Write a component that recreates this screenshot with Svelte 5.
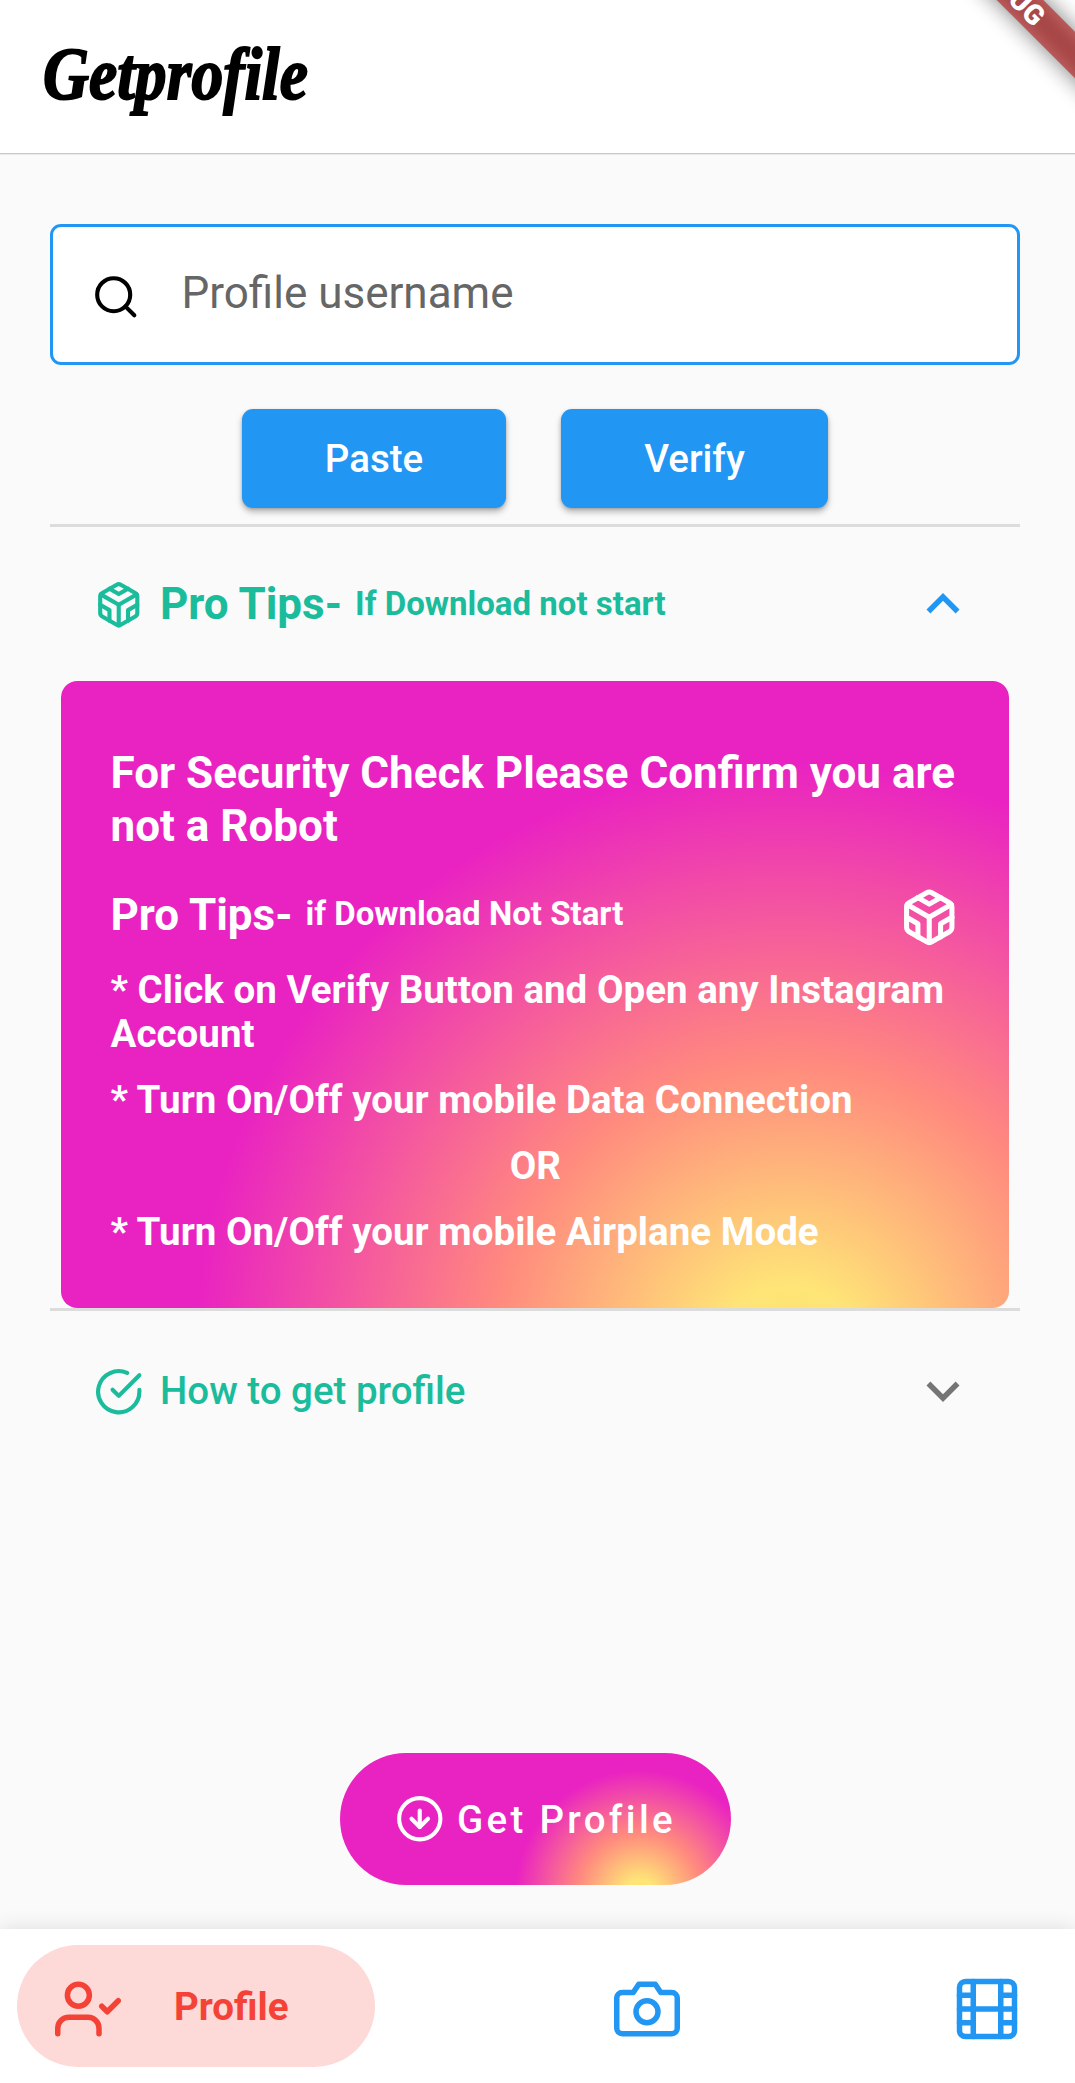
<script>
  const tips = [
    { text: '* Click on Verify Button and Open any Instagram Account' },
    { text: '* Turn On/Off your mobile Data Connection' },
    { text: 'OR', center: true },
    { text: '* Turn On/Off your mobile Airplane Mode' }
  ];
</script>

{#snippet cube()}
  <path d="M21 16V8a2 2 0 0 0-1-1.73l-7-4a2 2 0 0 0-2 0l-7 4A2 2 0 0 0 3 8v8a2 2 0 0 0 1 1.73l7 4a2 2 0 0 0 2 0l7-4A2 2 0 0 0 21 16z" />
  <polyline points="7.5 4.21 12 6.81 16.5 4.21" />
  <polyline points="7.5 19.79 7.5 14.6 3 12" />
  <polyline points="21 12 16.5 14.6 16.5 19.79" />
  <polyline points="3.27 6.96 12 12.01 20.73 6.96" />
  <line x1="12" y1="22.08" x2="12" y2="12" />
{/snippet}

<div class="screen">
  <header>
    <svg class="logo" width="300" height="153" role="img" aria-label="Getprofile">
      <text x="43" y="99" textLength="265" lengthAdjust="spacingAndGlyphs">Getprofile</text>
    </svg>
    <svg class="ribbon" width="145" height="150" viewBox="0 0 145 150" aria-hidden="true">
      <defs>
        <filter id="soft" x="-50%" y="-200%" width="200%" height="500%">
          <feGaussianBlur stdDeviation="11" />
        </filter>
      </defs>
      <g transform="translate(79 -11) rotate(45)">
        <rect class="shade" x="-110" y="-16.5" width="300" height="33" filter="url(#soft)" />
        <rect class="band" x="-110" y="-16.5" width="300" height="33" />
        <text x="0" y="10" text-anchor="middle">DEBUG</text>
      </g>
    </svg>
  </header>

  <main>
    <div class="field">
      <svg class="feather s18" viewBox="0 0 24 24">
        <circle cx="11" cy="11" r="8" />
        <line x1="21" y1="21" x2="16.65" y2="16.65" />
      </svg>
      <span>Profile username</span>
    </div>

    <div class="actions">
      <button class="paste">Paste</button>
      <button class="verify">Verify</button>
    </div>

    <section class="panel">
      <div class="row first">
        <svg class="feather s18" viewBox="0 0 24 24">{@render cube()}</svg>
        <strong>Pro Tips-</strong>
        <small>If Download not start</small>
        <svg class="chevron up" viewBox="0 0 24 24"><path d="M16.59 8.59L12 13.17 7.41 8.59 6 10l6 6 6-6z" /></svg>
      </div>
      <div class="card">
        <h2>For Security Check Please Confirm you are not a Robot</h2>
        <div class="sub">
          <strong>Pro Tips-</strong>
          <small>if Download Not Start</small>
          <svg class="feather s22" viewBox="0 0 24 24">{@render cube()}</svg>
        </div>
        {#each tips as tip}
          <p class:center={tip.center}>{tip.text}</p>
        {/each}
      </div>
    </section>

    <section class="panel">
      <div class="row second">
        <svg class="feather s18" viewBox="0 0 24 24">
          <path d="M22 11.08V12a10 10 0 1 1-5.93-9.14" />
          <polyline points="22 4 12 14.01 9 11.01" />
        </svg>
        <span>How to get profile</span>
        <svg class="chevron" viewBox="0 0 24 24"><path d="M16.59 8.59L12 13.17 7.41 8.59 6 10l6 6 6-6z" /></svg>
      </div>
    </section>

    <button class="get">
      <svg class="feather s18" viewBox="0 0 24 24">
        <circle cx="12" cy="12" r="10" />
        <polyline points="8 12 12 16 16 12" />
        <line x1="12" y1="8" x2="12" y2="16" />
      </svg>
      <span>Get Profile</span>
    </button>
  </main>

  <nav>
    <div class="tab active">
      <svg class="feather s24" viewBox="0 0 24 24">
        <path d="M16 21v-2a4 4 0 0 0-4-4H5a4 4 0 0 0-4 4v2" />
        <circle cx="8.5" cy="7" r="4" />
        <polyline points="17 11 19 13 23 9" />
      </svg>
      <span>Profile</span>
    </div>
    <div class="tab">
      <svg class="feather s24" viewBox="0 0 24 24">
        <path d="M23 19a2 2 0 0 1-2 2H3a2 2 0 0 1-2-2V8a2 2 0 0 1 2-2h4l2-3h6l2 3h4a2 2 0 0 1 2 2z" />
        <circle cx="12" cy="13" r="4" />
      </svg>
    </div>
    <div class="tab">
      <svg class="feather s24" viewBox="0 0 24 24">
        <rect x="2" y="2" width="20" height="20" rx="2.18" />
        <line x1="7" y1="2" x2="7" y2="22" />
        <line x1="17" y1="2" x2="17" y2="22" />
        <line x1="2" y1="12" x2="22" y2="12" />
        <line x1="2" y1="7" x2="7" y2="7" />
        <line x1="2" y1="17" x2="7" y2="17" />
        <line x1="17" y1="17" x2="22" y2="17" />
        <line x1="17" y1="7" x2="22" y2="7" />
      </svg>
    </div>
  </nav>
</div>

<style>
  :global(body) {
    margin: 0;
    background: #fafafa;
  }
  .screen {
    width: 1075px;
    height: 2083px;
    display: flex;
    flex-direction: column;
    overflow: hidden;
    background: #fafafa;
    font-family: Roboto, sans-serif;
    box-sizing: border-box;
  }
  header {
    flex: none;
    height: 153px;
    display: flex;
    justify-content: space-between;
    background: #fff;
    border-bottom: 1px solid #c8c8c8;
    box-shadow: 0 1px 0 #e9e9e9;
  }
  .logo {
    width: 330px;
    flex: none;
  }
  .logo text {
    font: italic 700 73px 'Liberation Serif', serif;
    fill: #000;
    stroke: #000;
    stroke-width: 2px;
  }
  .ribbon {
    flex: none;
  }
  .ribbon .shade {
    fill: rgba(0, 0, 0, 0.5);
  }
  .ribbon .band {
    fill: rgba(183, 28, 28, 0.627);
  }
  .ribbon text {
    font: 900 28px Roboto, sans-serif;
    fill: #fff;
  }
  main {
    flex: 1;
    display: flex;
    flex-direction: column;
    padding: 70px 55px 0 50px;
  }
  .feather {
    flex: none;
    display: block;
    fill: none;
    stroke: currentColor;
    stroke-width: 2;
    stroke-linecap: round;
    stroke-linejoin: round;
  }
  .s18 {
    width: 49.5px;
    height: 49.5px;
  }
  .s22 {
    width: 60.5px;
    height: 60.5px;
  }
  .s24 {
    width: 66px;
    height: 66px;
  }
  .field {
    box-sizing: border-box;
    height: 141px;
    border: 3px solid #2196f3;
    border-radius: 11px;
    background: #fff;
    display: flex;
    align-items: center;
    padding-left: 38px;
    color: #000;
  }
  .field svg {
    margin-top: 4px;
  }
  .field span {
    margin: 0 0 3px 41px;
    font-size: 44px;
    line-height: 52px;
    color: #666;
  }
  .actions {
    display: flex;
    justify-content: center;
    gap: 55px;
    margin: 44px 0 16px;
  }
  button {
    border: 0;
    padding: 0;
    color: #fff;
    font-family: inherit;
    font-weight: 500;
    font-size: 38.5px;
    line-height: 45px;
  }
  .actions button {
    height: 99px;
    border-radius: 11px;
    background: #2196f3;
    box-shadow: 0 4px 6px rgba(0, 0, 0, 0.27), 0 1px 3px rgba(0, 0, 0, 0.16);
  }
  .paste {
    width: 264px;
  }
  .verify {
    width: 267px;
  }
  .panel {
    border-top: 3px solid #dcdcdc;
  }
  .row {
    display: flex;
    align-items: center;
    padding: 0 44px;
    color: #1abc9c;
  }
  .row.first {
    height: 154px;
  }
  .row.second {
    height: 160px;
  }
  .row .feather {
    margin-top: 2px;
    margin-right: 16.5px;
  }
  strong {
    font-size: 44px;
    line-height: 52px;
    font-weight: 700;
  }
  small {
    margin: 0 0 2px 13px;
    font-size: 33px;
    line-height: 39px;
    font-weight: 700;
  }
  .row span {
    margin-bottom: 2px;
    font-size: 38.5px;
    line-height: 45px;
    font-weight: 500;
  }
  .chevron {
    width: 66px;
    height: 66px;
    margin-left: auto;
    fill: #757575;
  }
  .chevron.up {
    fill: #2196f3;
    transform: rotate(180deg);
  }
  .card {
    box-sizing: border-box;
    height: 627px;
    margin: 0 11px;
    padding: 65.5px 49px 0 49.5px;
    border-radius: 16.5px;
    color: #fff;
    background: radial-gradient(circle 597px at 728px 677px, #ffe06b 0%, #fee577 12%, #ff8a7e 49.5%, #e922c2 100%);
  }
  h2 {
    margin: 0 0 32px;
    font-size: 44px;
    line-height: 53px;
    font-weight: 700;
  }
  .sub {
    display: flex;
    align-items: center;
    height: 60.5px;
    margin-bottom: 23px;
  }
  .sub svg {
    margin: 4px 1px 0 auto;
  }
  .card p {
    margin: 0 0 22px;
    font-size: 38.5px;
    line-height: 44px;
    font-weight: 700;
    letter-spacing: 0.02px;
    font-variant-ligatures: common-ligatures;
  }
  .card p.center {
    text-align: center;
  }
  .get {
    align-self: center;
    display: flex;
    align-items: center;
    width: 391px;
    height: 132px;
    margin-top: 282px;
    padding-left: 55px;
    border-radius: 66px;
    letter-spacing: 3.3px;
    background: radial-gradient(circle 125px at 300px 142px, #ffe06b 0%, #fee577 12%, #ff8a7e 49.5%, #e922c2 100%);
  }
  .get span {
    margin-left: 13px;
  }
  nav {
    flex: none;
    box-sizing: border-box;
    height: 154px;
    display: flex;
    align-items: flex-start;
    padding: 16px 55px 0 17px;
    background: #fff;
    box-shadow: 0 0 20px rgba(0, 0, 0, 0.12);
  }
  .tab {
    display: flex;
    align-items: center;
    height: 121.5px;
    margin-left: 239px;
    color: #2196f3;
  }
  .tab:last-child {
    margin-left: auto;
  }
  .tab svg {
    margin-top: 7px;
  }
  .tab.active {
    box-sizing: border-box;
    width: 358px;
    margin-left: 0;
    padding-left: 38px;
    border-radius: 61px;
    background: #fdd9d7;
    color: #f44336;
  }
  .tab span {
    margin-left: 53px;
    padding-top: 1px;
    font-size: 38.5px;
    line-height: 45px;
    font-weight: 700;
  }
</style>
